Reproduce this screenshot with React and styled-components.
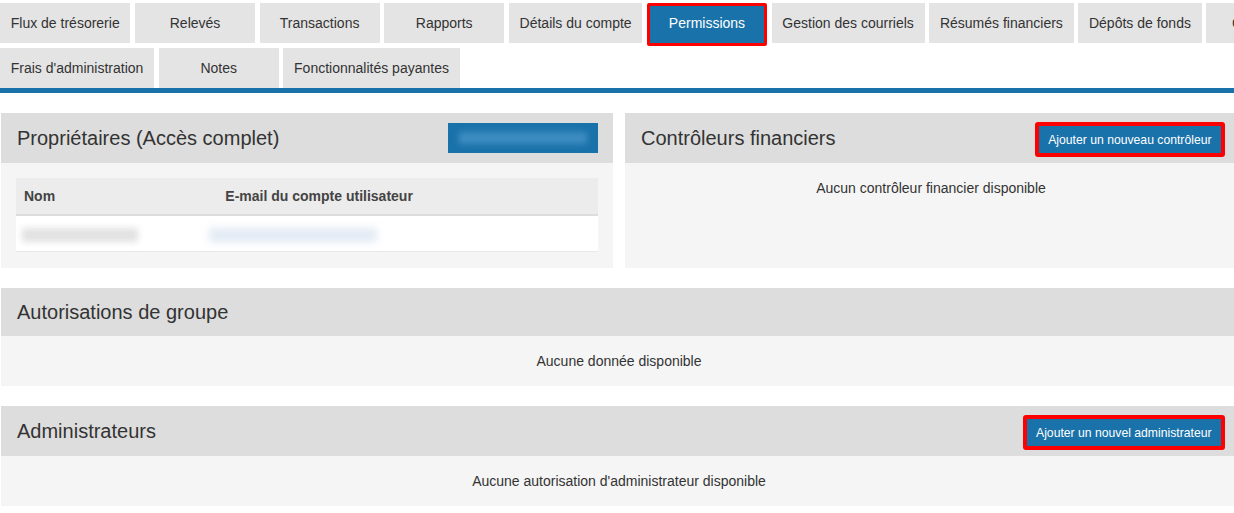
import React from 'react';
import styled, { createGlobalStyle } from 'styled-components';

const BLUE = '#1a72aa';

const GlobalStyle = createGlobalStyle`
  html, body {
    margin: 0;
    padding: 0;
    background: #fff;
    overflow: hidden;
  }
  body {
    font-family: "Liberation Sans", Arial, sans-serif;
    color: #333;
  }
`;

const Page = styled.div`
  padding-top: 3px;
  width: 1240px;
`;

const TabNav = styled.nav`
  display: flex;
  flex-wrap: wrap;
  align-items: flex-start;
  gap: 5px 4.6px;
  width: 1340px;
  border-bottom: 5px solid ${BLUE};
`;

const Tab = styled.div`
  box-sizing: border-box;
  min-width: 120px;
  height: ${props => (props.$active ? '43px' : '40px')};
  margin-bottom: ${props => (props.$active ? '-3px' : '0')};
  padding: ${props => (props.$active ? '0 8px 3px' : '0 10.75px')};
  display: flex;
  align-items: center;
  justify-content: center;
  font-size: 14px;
  white-space: nowrap;
  background: ${props => (props.$active ? BLUE : '#e4e4e4')};
  color: ${props => (props.$active ? '#fff' : '#333')};
  border: ${props => (props.$active ? '3px solid #f00' : 'none')};
  border-radius: ${props => (props.$active ? '2px' : '0')};
`;

const Content = styled.div`
  display: flex;
  flex-direction: column;
  gap: 20px;
  padding: 20px 0 0 1px;
  width: 1236px;
`;

const TopRow = styled.div`
  display: grid;
  grid-template-columns: 1fr 1fr;
  gap: 12px;
`;

const Panel = styled.section`
  display: flex;
  flex-direction: column;
  background: #f5f5f5;
`;

const PanelHeader = styled.header`
  box-sizing: border-box;
  height: ${props => props.$height || 50}px;
  display: flex;
  align-items: center;
  justify-content: space-between;
  padding: 0 12px 0 16px;
  background: #dddddd;
`;

const PanelTitle = styled.h2`
  margin: 0;
  font-size: 20px;
  font-weight: normal;
  color: #333;
`;

const Highlight = styled.div`
  display: flex;
  border: 4px solid #f00;
  border-radius: 3px;
  margin-top: 3px;
`;

const Button = styled.button`
  height: 27px;
  padding: 0 9.5px;
  border: none;
  background: ${BLUE};
  color: #fff;
  font-family: "Liberation Sans", Arial, sans-serif;
  font-size: 12.2px;
  cursor: pointer;
`;

const RedactedButton = styled.div`
  width: 150px;
  height: 30px;
  margin-right: 3px;
  display: flex;
  align-items: center;
  justify-content: center;
  background: ${BLUE};
`;

const Blur = styled.span`
  display: inline-block;
  width: ${props => props.$w}px;
  height: ${props => props.$h || 14}px;
  background: ${props => props.$color};
  filter: blur(${props => props.$blur || 3}px);
  vertical-align: middle;
`;

const TableBody = styled.div`
  padding: 15px 15px 16px;
`;

const Table = styled.table`
  width: 100%;
  border-collapse: collapse;
  font-size: 14px;
`;

const Th = styled.th`
  height: 36px;
  padding: 0 8px;
  text-align: left;
  font-weight: bold;
  color: #444;
  background: #ececec;
  border-bottom: 2px solid #dddddd;
  width: ${props => props.$width || 'auto'};
`;

const Td = styled.td`
  height: 35px;
  padding: 0 8px;
  background: #fff;
  border-bottom: 1px solid #e9e9e9;
`;

const EmptyText = styled.p`
  margin: 0;
  padding: 16px;
  font-size: 14px;
  line-height: 18px;
  text-align: center;
  color: #333;
`;

const tabs = [
  'Flux de trésorerie',
  'Relevés',
  'Transactions',
  'Rapports',
  'Détails du compte',
  'Permissions',
  'Gestion des courriels',
  'Résumés financiers',
  'Dépôts de fonds',
  'Conformité',
  "Frais d'administration",
  'Notes',
  'Fonctionnalités payantes',
];

export default function App() {
  return (
    <Page>
      <GlobalStyle />
      <TabNav>
        {tabs.map(label => (
          <Tab key={label} $active={label === 'Permissions'}>{label}</Tab>
        ))}
      </TabNav>

      <Content>
        <TopRow>
          <Panel>
            <PanelHeader>
              <PanelTitle>Propriétaires (Accès complet)</PanelTitle>
              <RedactedButton>
                <Blur $w={128} $h={12} $color="#3d8dc2" />
              </RedactedButton>
            </PanelHeader>
            <TableBody>
              <Table>
                <thead>
                  <tr>
                    <Th $width="34.6%">Nom</Th>
                    <Th>E-mail du compte utilisateur</Th>
                  </tr>
                </thead>
                <tbody>
                  <tr>
                    <Td>
                      <Blur $w={116} $color="#e2e2e2" style={{ marginLeft: -2 }} />
                    </Td>
                    <Td>
                      <Blur $w={168} $color="#e1eaf4" $blur={4} style={{ marginLeft: -16 }} />
                    </Td>
                  </tr>
                </tbody>
              </Table>
            </TableBody>
          </Panel>

          <Panel>
            <PanelHeader>
              <PanelTitle>Contrôleurs financiers</PanelTitle>
              <Highlight>
                <Button>Ajouter un nouveau contrôleur</Button>
              </Highlight>
            </PanelHeader>
            <EmptyText>Aucun contrôleur financier disponible</EmptyText>
          </Panel>
        </TopRow>

        <Panel>
          <PanelHeader $height={48}>
            <PanelTitle>Autorisations de groupe</PanelTitle>
          </PanelHeader>
          <EmptyText>Aucune donnée disponible</EmptyText>
        </Panel>

        <Panel>
          <PanelHeader>
            <PanelTitle>Administrateurs</PanelTitle>
            <Highlight>
              <Button>Ajouter un nouvel administrateur</Button>
            </Highlight>
          </PanelHeader>
          <EmptyText>Aucune autorisation d'administrateur disponible</EmptyText>
        </Panel>
      </Content>
    </Page>
  );
}
